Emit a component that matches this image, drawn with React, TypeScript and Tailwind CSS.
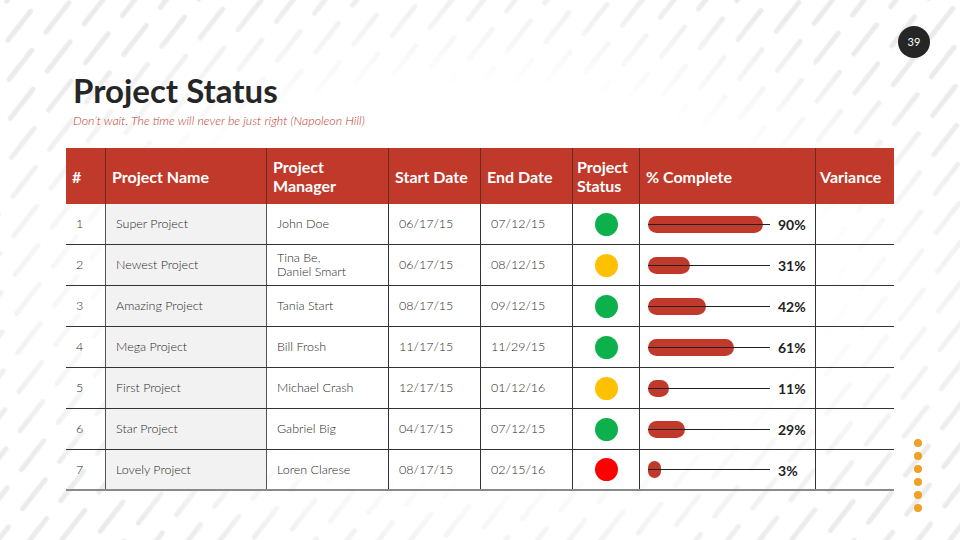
const rows = [
  { n: "1", name: "Super Project", pm: ["John Doe"], start: "06/17/15", end: "07/12/15", status: "bg-[#0db14b]", pct: 90, w: 115 },
  { n: "2", name: "Newest Project", pm: ["Tina Be,", "Daniel Smart"], start: "06/17/15", end: "08/12/15", status: "bg-[#ffc000]", pct: 31, w: 42 },
  { n: "3", name: "Amazing Project", pm: ["Tania Start"], start: "08/17/15", end: "09/12/15", status: "bg-[#0db14b]", pct: 42, w: 58 },
  { n: "4", name: "Mega Project", pm: ["Bill Frosh"], start: "11/17/15", end: "11/29/15", status: "bg-[#0db14b]", pct: 61, w: 86 },
  { n: "5", name: "First Project", pm: ["Michael Crash"], start: "12/17/15", end: "01/12/16", status: "bg-[#ffc000]", pct: 11, w: 21 },
  { n: "6", name: "Star Project", pm: ["Gabriel Big"], start: "04/17/15", end: "07/12/15", status: "bg-[#0db14b]", pct: 29, w: 37 },
  { n: "7", name: "Lovely Project", pm: ["Loren Clarese"], start: "08/17/15", end: "02/15/16", status: "bg-[#ff0000]", pct: 3, w: 13 },
];

const cols = "grid grid-cols-[39px_161px_122px_92px_92px_67px_176px_79px]";

function Stripes() {
  return (
    <svg className="absolute inset-0" width="960" height="540">
      <defs>
        <pattern id="dash" width="60" height="50" patternUnits="userSpaceOnUse" patternTransform="rotate(-52)">
          <line x1="3" y1="6" x2="40" y2="6" stroke="#ebebeb" strokeWidth="5" strokeLinecap="round" />
          <line x1="33" y1="31" x2="70" y2="31" stroke="#ebebeb" strokeWidth="5" strokeLinecap="round" />
          <line x1="-27" y1="31" x2="10" y2="31" stroke="#ebebeb" strokeWidth="5" strokeLinecap="round" />
        </pattern>
        <radialGradient id="fade" cx="0.5" cy="0.52" r="0.72">
          <stop offset="0.5" stopColor="black" />
          <stop offset="0.8" stopColor="white" />
        </radialGradient>
        <mask id="m">
          <rect width="960" height="540" fill="url(#fade)" />
        </mask>
      </defs>
      <rect width="960" height="540" fill="url(#dash)" mask="url(#m)" />
    </svg>
  );
}

export default function App() {
  return (
    <div className="relative w-[960px] h-[540px] overflow-hidden bg-white font-['Lato','Liberation_Sans',sans-serif]">
      <Stripes />

      {/* PAGE NUMBER */}
      <div className="absolute left-[898px] top-[26px] w-[32px] h-[32px] rounded-full bg-[#262626] text-white text-[11px] flex items-center justify-center">
        39
      </div>

      {/* DOTS */}
      <div className="absolute left-[914px] top-[439px] flex flex-col gap-[5px]">
        {[0, 1, 2, 3, 4, 5].map((i) => (
          <div key={i} className="w-[8px] h-[8px] rounded-full bg-[#f0a024]" />
        ))}
      </div>

      <div className="relative pl-[66px] pt-[70px]">
        <h1 className="pl-[7px] text-[33px] leading-[40px] font-bold text-[#262626]">Project Status</h1>
        <p className="pl-[7px] mt-[3px] text-[12.4px] leading-[15px] italic font-light text-[#c0392b]">
          Don’t wait. The time will never be just right (Napoleon Hill)
        </p>

        <div className="mt-[20px] w-[828px]">
          {/* HEADER */}
          <div className={`${cols} h-[56px] bg-[#c0392b] text-white font-bold text-[16px] leading-[19px]`}>
            <div className="px-[6px] flex items-center">#</div>
            <div className="px-[6px] flex items-center border-l border-[#6b2a22]">Project Name</div>
            <div className="px-[6px] flex items-center border-l border-[#6b2a22]">Project<br />Manager</div>
            <div className="px-[6px] flex items-center border-l border-[#6b2a22]">Start Date</div>
            <div className="px-[6px] flex items-center border-l border-[#6b2a22]">End Date</div>
            <div className="px-[4px] flex items-center border-l border-[#6b2a22]">Project<br />Status</div>
            <div className="px-[6px] flex items-center border-l border-[#6b2a22]">% Complete</div>
            <div className="px-[4px] flex items-center border-l border-[#6b2a22]">Variance</div>
          </div>

          {/* ROWS */}
          {rows.map((r, i) => (
            <div
              key={r.n}
              className={`${cols} h-[41px] text-[12.5px] leading-[14px] font-light text-[#2a2a2a] ${i === rows.length - 1 ? "border-b-2 border-[#8a8a8a]" : "border-b border-[#333]"}`}
            >
              <div className="pl-[10px] flex items-center">{r.n}</div>
              <div className="pl-[10px] flex items-center border-l border-[#555] bg-[#f2f2f2]">{r.name}</div>
              <div className="pl-[10px] flex flex-col justify-center border-l border-[#555]">
                {r.pm.map((p) => (
                  <span key={p}>{p}</span>
                ))}
              </div>
              <div className="pl-[10px] flex items-center border-l border-[#333]">{r.start}</div>
              <div className="pl-[10px] flex items-center border-l border-[#333]">{r.end}</div>
              <div className="flex items-center justify-center border-l border-[#333]">
                <div className={`w-[23px] h-[23px] rounded-full ${r.status}`} />
              </div>
              <div className="pl-[8px] flex items-center border-l border-[#333]">
                <div className="relative w-[122px] h-[17px] flex items-center">
                  <div className="h-[17px] rounded-full bg-[#c0392b]" style={{ width: r.w }} />
                  <div className="absolute left-0 right-0 top-[8px] h-px bg-[#222]" />
                </div>
                <span className="ml-[8px] mt-[2px] text-[14px] font-bold text-[#222]">{r.pct}%</span>
              </div>
              <div className="border-l border-[#333]" />
            </div>
          ))}
        </div>
      </div>
    </div>
  );
}
